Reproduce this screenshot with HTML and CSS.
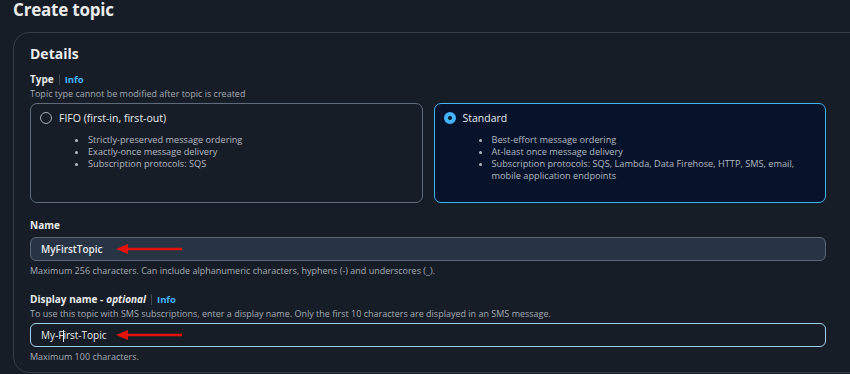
FILE: index.html
```html
<!DOCTYPE html>
<html lang="en">
<head>
    <meta charset="UTF-8">
    <title>Create topic</title>
    <link rel="stylesheet" href="styles.css">
</head>
<body>
    <div class="page">
        <h1 class="page-title">Create topic</h1>
        <div class="panel">
            <h2 class="panel-title">Details</h2>

            <div class="field">
                <div class="label">Type <span class="sep"></span> <a class="info">Info</a></div>
                <div class="desc">Topic type cannot be modified after topic is created</div>
                <div class="tiles">
                    <div class="tile">
                        <div class="tile-head"><span class="radio"></span>FIFO (first-in, first-out)</div>
                        <ul class="tile-list">
                            <li>Strictly-preserved message ordering</li>
                            <li>Exactly-once message delivery</li>
                            <li>Subscription protocols: SQS</li>
                        </ul>
                    </div>
                    <div class="tile selected">
                        <div class="tile-head"><span class="radio on"></span>Standard</div>
                        <ul class="tile-list">
                            <li>Best-effort message ordering</li>
                            <li>At-least once message delivery</li>
                            <li>Subscription protocols: SQS, Lambda, Data Firehose, HTTP, SMS, email, mobile application endpoints</li>
                        </ul>
                    </div>
                </div>
            </div>

            <div class="field">
                <div class="label">Name</div>
                <div class="input filled">
                    MyFirstTopic
                    <svg class="arrow" width="70" height="12" viewBox="0 0 70 12">
                        <line x1="8" y1="6" x2="66" y2="6" stroke="#e3120b" stroke-width="2.5"/>
                        <polygon points="0,6 12,1 12,11" fill="#e3120b"/>
                    </svg>
                </div>
                <div class="desc">Maximum 256 characters. Can include alphanumeric characters, hyphens (-) and underscores (_).</div>
            </div>

            <div class="field">
                <div class="label">Display name - <i>optional</i> <span class="sep"></span> <a class="info">Info</a></div>
                <div class="desc">To use this topic with SMS subscriptions, enter a display name. Only the first 10 characters are displayed in an SMS message.</div>
                <div class="input focused">
                    My-F<span class="caret"></span>irst-Topic
                    <svg class="arrow" width="70" height="12" viewBox="0 0 70 12">
                        <line x1="8" y1="6" x2="66" y2="6" stroke="#e3120b" stroke-width="2.5"/>
                        <polygon points="0,6 12,1 12,11" fill="#e3120b"/>
                    </svg>
                </div>
                <div class="desc">Maximum 100 characters.</div>
            </div>
        </div>
    </div>
</body>
</html>
```

FILE: styles.css
```css
body {
    margin: 0;
    background: #161d26;
    font-family: 'Open Sans', sans-serif;
    color: #e9ebed;
    overflow: hidden;
}

.page {
    padding: 0 0 0 13px;
}

.page-title {
    margin: 0;
    font-size: 17px;
    font-weight: 700;
    letter-spacing: -0.2px;
    line-height: 20px;
    height: 32px;
}

.panel {
    width: 860px;
    border: 1px solid #343d48;
    border-radius: 16px;
    padding: 10px 16px 9px;
    box-sizing: border-box;
}

.panel-title {
    margin: 0 0 8px;
    font-size: 14px;
    font-weight: 700;
    line-height: 22px;
}

.field {
    width: 796px;
    margin-bottom: 16px;
}

.field:last-child {
    margin-bottom: 0;
}

.label {
    font-size: 10px;
    font-weight: 700;
    line-height: 13px;
    display: flex;
    align-items: center;
}

.label i {
    margin-left: 3px;
}

.sep {
    display: inline-block;
    width: 1px;
    height: 11px;
    background: #424650;
    margin: 0 5px;
}

.info {
    color: #42b4ff;
    font-weight: 700;
    font-size: 9.5px;
}

.desc {
    font-size: 9px;
    line-height: 13px;
    color: #a4abb3;
}

.label + .desc {
    margin-top: 1px;
}

.tiles {
    display: grid;
    grid-template-columns: 1fr 1fr;
    gap: 11px;
    margin-top: 3px;
}

.tile {
    height: 100px;
    box-sizing: border-box;
    border: 1px solid #5f6b7a;
    border-radius: 7px;
    padding: 7px 9px;
}

.tile.selected {
    border-color: #42b4ff;
    background: #06132a;
}

.tile-head {
    display: flex;
    align-items: center;
    font-size: 10.5px;
    line-height: 14px;
}

.radio {
    width: 10px;
    height: 10px;
    border: 1px solid #a4abb3;
    border-radius: 50%;
    margin-right: 7px;
}

.radio.on {
    width: 4px;
    height: 4px;
    border: 4px solid #42b4ff;
    background: #0f141a;
}

.tile-list {
    margin: 9px 0 0;
    padding-left: 48px;
    font-size: 9.2px;
    line-height: 12px;
    color: #b4b9c0;
}

.input {
    position: relative;
    margin: 5px 0 3px;
    height: 24px;
    box-sizing: border-box;
    border-radius: 6px;
    padding: 0 10px;
    font-size: 10px;
    line-height: 22px;
}

.input.filled {
    background: #283443;
    border: 1px solid #5b6676;
    font-weight: 600;
}

.input.focused {
    border: 1.5px solid #9fd0ee;
    margin-top: 3px;
}

.caret {
    display: inline-block;
    width: 1px;
    height: 12px;
    background: #e9ebed;
    vertical-align: middle;
    margin-right: -1px;
}

.arrow {
    position: absolute;
    left: 85px;
    top: 5px;
}
```
